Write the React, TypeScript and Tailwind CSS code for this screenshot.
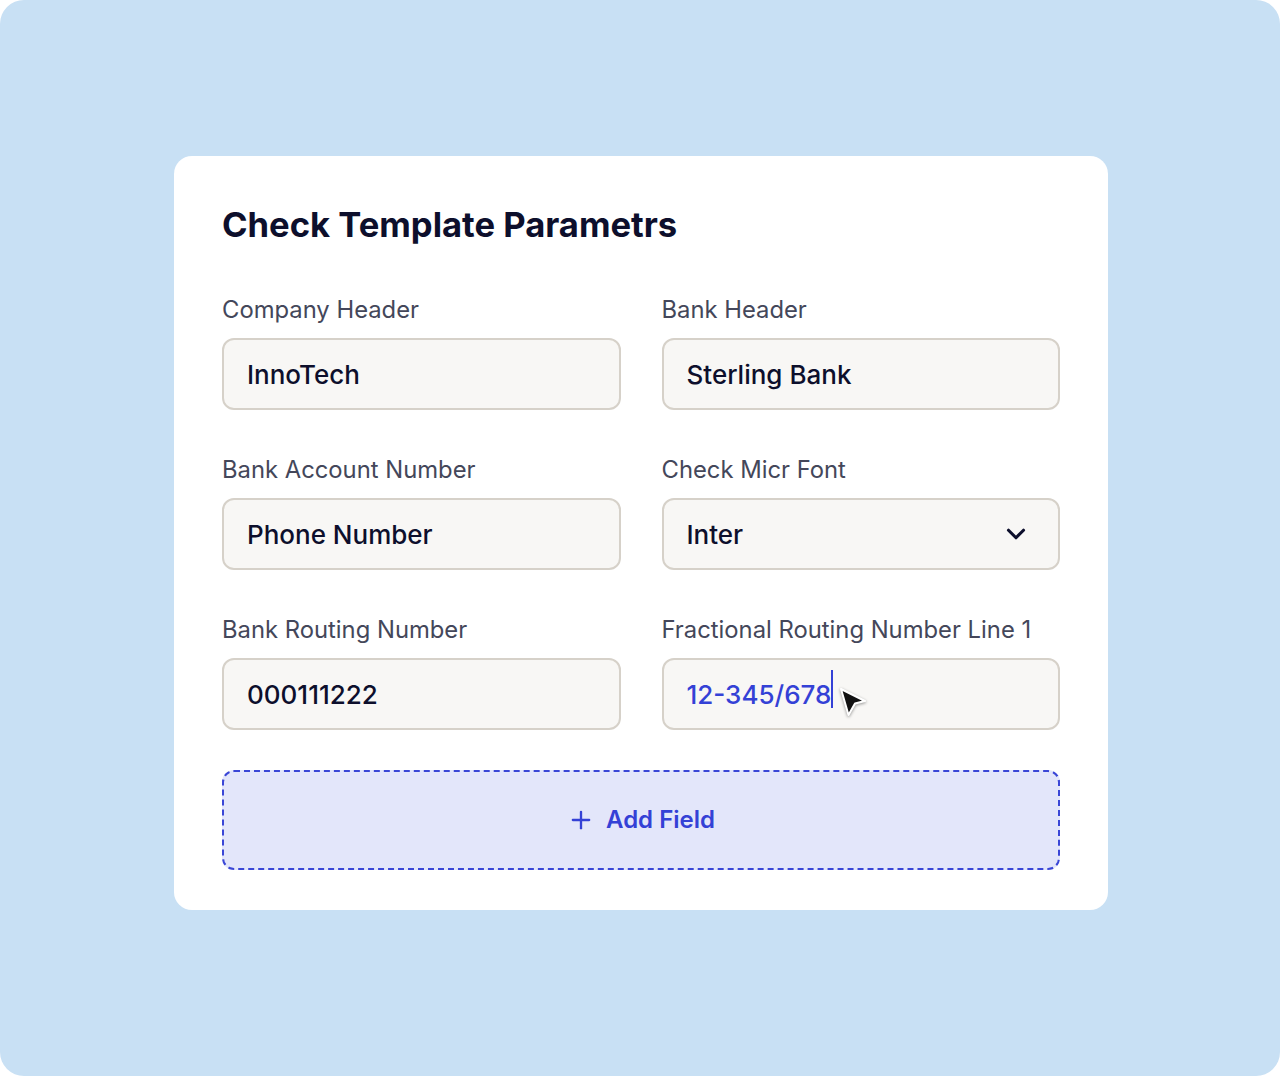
import { ChevronDown, Plus } from "lucide-react";

const FONT = { fontFamily: "Inter, 'Noto Sans', sans-serif" };

type Field = {
  label: string;
  value: string;
  kind?: "select" | "active";
};

const FIELDS: Field[] = [
  { label: "Company Header", value: "InnoTech" },
  { label: "Bank Header", value: "Sterling Bank" },
  { label: "Bank Account Number", value: "Phone Number" },
  { label: "Check Micr Font", value: "Inter", kind: "select" },
  { label: "Bank Routing Number", value: "000111222" },
  { label: "Fractional Routing Number Line 1", value: "12-345/678", kind: "active" },
];

// mouse pointer sitting over the active input
function Pointer() {
  return (
    <svg
      width="34"
      height="36"
      viewBox="0 0 34 36"
      className="absolute left-[173px] top-[25px] max-w-none drop-shadow-[0_1px_1.5px_rgba(0,0,0,0.4)]"
    >
      <path
        d="M4 4 L28 16 L18 18.5 L11.5 30 Z"
        fill="#111"
        stroke="#fff"
        strokeWidth="2"
        strokeLinejoin="round"
      />
    </svg>
  );
}

function FieldBox({ field }: { field: Field }) {
  return (
    <div className="flex flex-col gap-[14px]">
      <label className="text-[23.8px] leading-[28px] text-[#44475a]">{field.label}</label>
      <div className="relative h-[72px] rounded-[12px] border-2 border-[#d6d1c9] bg-[#f8f7f5] flex items-center justify-between pl-[23px] pr-[27px]">
        {field.kind === "active" ? (
          <>
            <span className="relative text-[26px] font-medium text-[#3441d6]">
              {field.value}
              <span className="absolute -right-[2px] top-[-5px] h-[38px] w-[2px] bg-[#3441d6]" />
            </span>
            <Pointer />
          </>
        ) : (
          <span className="text-[26px] font-medium text-[#0d0f2c]">{field.value}</span>
        )}
        {field.kind === "select" && (
          <ChevronDown className="w-[30px] h-[30px] text-[#0d0f2c]" strokeWidth={2.5} />
        )}
      </div>
    </div>
  );
}

export default function App() {
  return (
    <div className="w-[1280px] h-[1076px] bg-white" style={FONT}>
      <div className="w-full h-full rounded-[24px] bg-[#c8e0f4] flex justify-center pt-[156px] pl-[2px]">
        <div className="w-[934px] h-[754px] rounded-[18px] bg-white px-[48px] pt-[48px] pb-[40px]">
          <h1 className="text-[34.6px] leading-[40px] font-bold text-[#0d0f2c]">
            Check Template Parametrs
          </h1>

          <div className="mt-[52px] grid grid-cols-2 gap-x-[41px] gap-y-[46px]">
            {FIELDS.map((f) => (
              <FieldBox key={f.label} field={f} />
            ))}
          </div>

          <button className="mt-[40px] w-full h-[100px] rounded-[12px] border-2 border-dashed border-[#3a46d6] bg-[#e3e6fa] flex items-center justify-center gap-[11px] text-[#3441d6]">
            <Plus className="w-[28px] h-[28px]" strokeWidth={2} />
            <span className="text-[24px] font-semibold">Add Field</span>
          </button>
        </div>
      </div>
    </div>
  );
}
